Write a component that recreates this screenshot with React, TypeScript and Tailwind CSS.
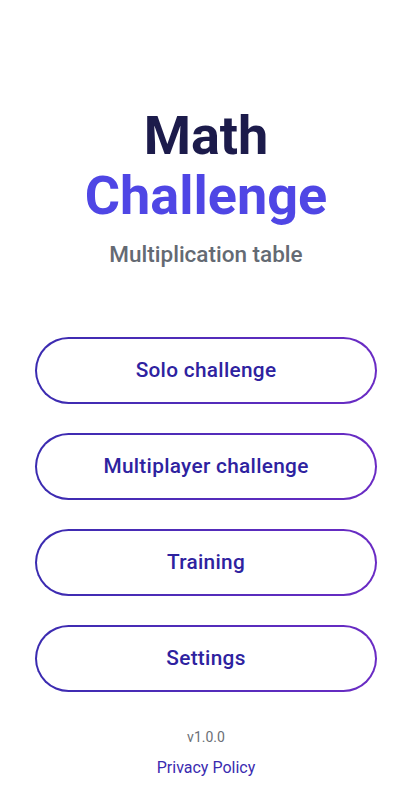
import React from "react";

const buttons = ["Solo challenge", "Multiplayer challenge", "Training", "Settings"];

export default function App() {
  return (
    <div className="w-[412px] h-[800px] bg-white flex flex-col items-center" style={{ fontFamily: "Roboto, 'Noto Sans', sans-serif" }}>
      <div className="mt-[106px] flex flex-col items-center">
        <div className="text-[54px] leading-[60px] font-bold text-[#1c1b4b]">Math</div>
        <div className="text-[54px] leading-[60px] font-bold text-[#4f46e5]">Challenge</div>
        <div className="mt-[14px] text-[22.5px] leading-[28px] font-medium text-[#646a73]">Multiplication table</div>
      </div>
      <div className="mt-[69px] w-full px-[35px] flex flex-col gap-[29px]">
        {buttons.map((b) => (
          <div key={b} className="rounded-full p-[2px] bg-gradient-to-r from-[#3a2bb0] to-[#6a2bc4]">
            <div className="h-[63px] rounded-full bg-white flex items-center justify-center text-[20.8px] font-medium text-[#2e22a0] tracking-[0.3px]">
              {b}
            </div>
          </div>
        ))}
      </div>
      <div className="mt-[35px] text-[14px] text-[#6b6f76]">v1.0.0</div>
      <div className="mt-[8px] text-[16px] text-[#3a2bb0]">Privacy Policy</div>
    </div>
  );
}
